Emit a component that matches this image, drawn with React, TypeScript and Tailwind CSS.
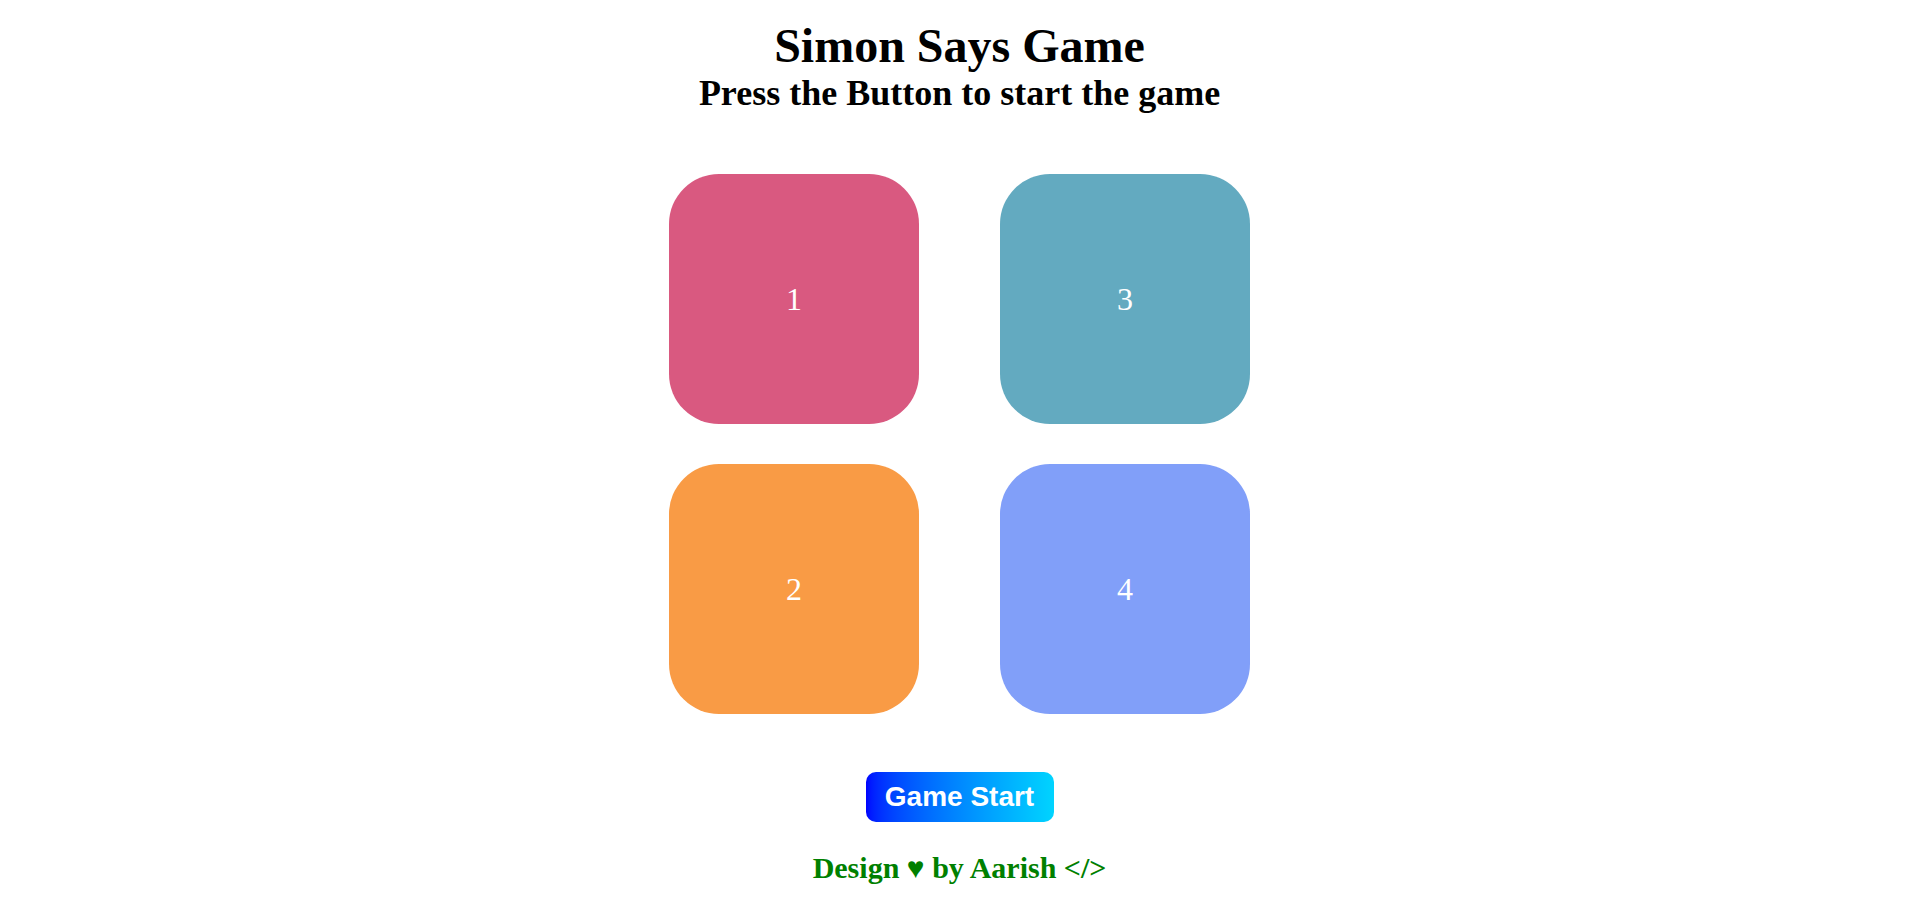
export default function App() {
  const boxes = [
    { n: "1", c: "bg-[#d95980]" },
    { n: "3", c: "bg-[#63aac0]" },
    { n: "2", c: "bg-[#f99b45]" },
    { n: "4", c: "bg-[#819ff9]" },
  ];
  return (
    <div className="min-h-screen bg-white flex flex-col items-center font-['Liberation_Serif',serif] text-black">
      <h1 className="mt-[22px] text-[48px] leading-[48px] font-bold">Simon Says Game</h1>
      <h2 className="mt-[5px] text-[36px] leading-[36px] font-bold">Press the Button to start the game</h2>
      <div className="mt-[63px] grid grid-cols-[250px_250px] gap-x-[81px] gap-y-[40px]">
        {boxes.map((b) => (
          <div
            key={b.n}
            className={`${b.c} w-[250px] h-[250px] rounded-[50px] flex items-center justify-center text-white text-[32px]`}
          >
            {b.n}
          </div>
        ))}
      </div>
      <button className="mt-[58px] w-[188px] h-[50px] rounded-[10px] bg-gradient-to-r from-[#0200ff] to-[#00d4ff] text-white font-bold text-[28px] leading-[32px] font-['Liberation_Sans',Arial,sans-serif] flex items-center justify-center">
        Game Start
      </button>
      <h3 className="mt-[31px] text-[30px] leading-[30px] font-bold text-[#008000]">
        Design ♥ by Aarish &lt;/&gt;
      </h3>
    </div>
  );
}
